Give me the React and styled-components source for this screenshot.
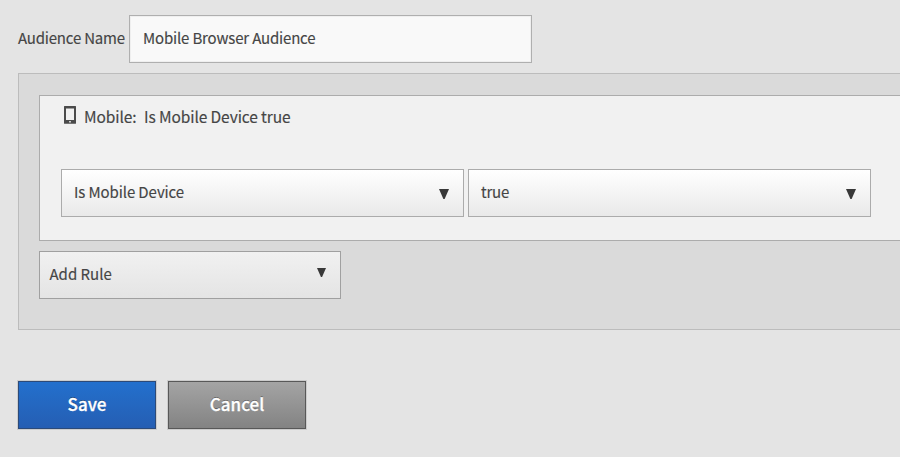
import React from "react";
import styled, { createGlobalStyle } from "styled-components";

const Global = createGlobalStyle`
  * { box-sizing: border-box; }
  html, body { margin: 0; background: #e4e4e4; overflow: hidden; }
  body, input, button { font-family: "Noto Sans CJK SC", "Noto Sans", sans-serif; }
`;

const Page = styled.main`
  width: 900px;
  height: 457px;
  padding: 15px 0 0 18px;
  overflow: hidden;
  color: #454545;
  background: #e4e4e4;
`;

const Text = styled.span`
  font-size: ${(p) => p.$size || 15}px;
  line-height: 20px;
  white-space: pre;
  letter-spacing: ${(p) => p.$track || 0}px;
  -webkit-text-stroke: 0.15px #454545;
`;

const NameRow = styled.label`
  display: flex;
  align-items: center;
  height: 48px;
`;

const NameLabel = styled(Text)`
  width: 111px;
  padding-bottom: 3px;
`;

const NameInput = styled.input`
  width: 403px;
  height: 48px;
  padding: 0 13px 3px;
  border: 1px solid #afafaf;
  border-radius: 0;
  outline: none;
  color: #454545;
  background: #f9f9f9;
  box-shadow: inset 0 0 0 1px #efefef;
  font-size: 15px;
  letter-spacing: -0.17px;
  -webkit-text-stroke: 0.15px #454545;
`;

const RulesPanel = styled.section`
  width: 900px;
  height: 257px;
  margin-top: 10px;
  padding: 21px 0 0 20px;
  border: 1px solid #bcbcbc;
  background: #dadada;
`;

const RuleCard = styled.div`
  height: 146px;
  padding: 10px 0 0 21px;
  border: 1px solid #acacac;
  background: #f1f1f1;
`;

const RuleTitle = styled.div`
  display: flex;
  height: 20px;
  margin-left: 3px;
`;

const RuleName = styled(Text)`
  width: 60px;
  margin-left: 8px;
`;

const SelectRow = styled.div`
  display: flex;
  gap: 4px;
  margin-top: 43px;
`;

const SelectBox = styled.button`
  display: flex;
  align-items: center;
  justify-content: space-between;
  width: ${(p) => p.$width}px;
  height: 48px;
  margin: ${(p) => (p.$muted ? "10px 0 0" : "0")};
  padding: ${(p) => (p.$muted ? "0 14px 2px 9.5px" : "0 14px 2px 12px")};
  border: 1px solid ${(p) => (p.$muted ? "#a0a0a0" : "#ababab")};
  color: #454545;
  background: ${(p) =>
    p.$muted
      ? "linear-gradient(#f1f1f1, #e4e4e4)"
      : "linear-gradient(#ffffff, #e9e9e9)"};
  text-align: left;
`;

const Actions = styled.div`
  display: flex;
  gap: 12px;
  margin-top: 51px;
`;

const ActionButton = styled.button`
  width: 138px;
  height: 48px;
  padding: 0 0 2px;
  border: 1px solid ${(p) => (p.$primary ? "#2c4a78" : "#585858")};
  color: #fff;
  background: ${(p) =>
    p.$primary
      ? "linear-gradient(#2370cd, #255eb3)"
      : "linear-gradient(#a4a4a4, #838383)"};
  box-shadow: 0 0 0 1px rgba(0, 0, 0, 0.1);
  font-size: 17px;
  font-weight: 500;
  line-height: 44px;
  -webkit-text-stroke: 0.3px #fff;
  text-shadow: 0 -1px 0 rgba(0, 0, 0, 0.4);
`;

const PhoneIcon = styled.svg`
  display: block;
  width: 12px;
  height: 18px;
`;

const Arrow = styled.svg`
  display: block;
  width: ${(p) => p.$size}px;
  height: ${(p) => p.$size}px;
  margin-top: ${(p) => p.$drop}px;
  fill: #383838;
`;

const Select = ({ label, width, muted, track }) => (
  <SelectBox type="button" $width={width} $muted={muted}>
    <Text $track={track}>{label}</Text>
    <Arrow viewBox="0 0 10 10" $size={muted ? 9 : 10} $drop={muted ? -3 : 3}>
      <path d="M0 0H10L5.6 10H4.4Z" />
    </Arrow>
  </SelectBox>
);

export default function App() {
  return (
    <Page>
      <Global />
      <NameRow>
        <NameLabel $track={-0.2}>Audience Name</NameLabel>
        <NameInput defaultValue="Mobile Browser Audience" />
      </NameRow>
      <RulesPanel>
        <RuleCard>
          <RuleTitle>
            <PhoneIcon viewBox="0 0 12 18">
              <path
                fill="#4b4b4b"
                fillRule="evenodd"
                d="M0.4 0H11.6L12 0.4V17.4L11.6 17.8H0.4L0 17.4V0.4ZM2 2.6V14H10V2.6ZM5.2 15V16.6H6.8V15Z"
              />
            </PhoneIcon>
            <RuleName $size={15.5} $track={-0.1}>Mobile:</RuleName>
            <Text $size={15.5} $track={-0.1}>Is Mobile Device true</Text>
          </RuleTitle>
          <SelectRow>
            <Select label="Is Mobile Device" width={403} track={-0.1} />
            <Select label="true" width={403} track={-0.2} />
          </SelectRow>
        </RuleCard>
        <Select label="Add Rule" width={302} muted track={0} />
      </RulesPanel>
      <Actions>
        <ActionButton type="button" $primary>Save</ActionButton>
        <ActionButton type="button">Cancel</ActionButton>
      </Actions>
    </Page>
  );
}
